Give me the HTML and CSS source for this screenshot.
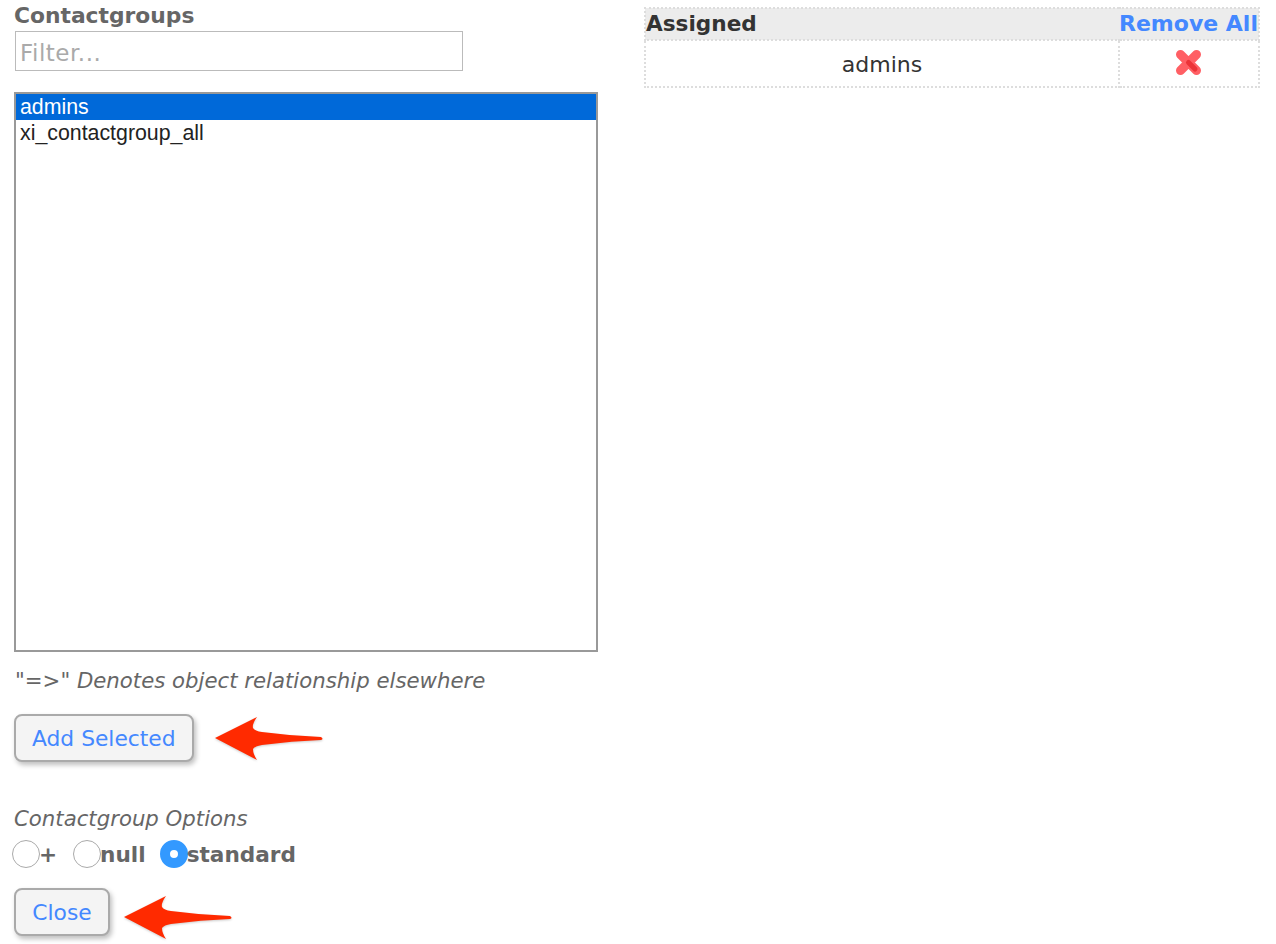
FILE: index.html
```html
<!DOCTYPE html>
<html>
<head>
  <title>Contactgroups</title>
  <link rel="stylesheet" href="styles.css">
</head>
<body>
  <div class="layout">
    <div class="left-col">
      <div class="heading">Contactgroups</div>
      <input class="filter" type="text" placeholder="Filter...">
      <div class="listbox">
        <div class="option selected">admins</div>
        <div class="option">xi_contactgroup_all</div>
      </div>
      <div class="note">"=&gt;" Denotes object relationship elsewhere</div>
      <div class="button-row">
        <button class="btn">Add Selected</button>
        <svg class="arrow arrow-add" width="112" height="50" viewBox="0 0 112 50">
          <path d="M3 24 L45 3 Q40 10 41 14 Q43 17 50 18 Q80 22 109 23 Q112 25 109 26 Q80 27 50 31 Q43 32 41 35 Q41 40 45 46 Z" fill="#ff2a00"/>
        </svg>
      </div>
      <div class="options-label">Contactgroup Options</div>
      <div class="radio-row">
        <span class="radio"></span><span class="radio-text plus">+</span>
        <span class="radio"></span><span class="radio-text null">null</span>
        <span class="radio checked"></span><span class="radio-text">standard</span>
      </div>
      <div class="button-row close-row">
        <button class="btn">Close</button>
        <svg class="arrow arrow-close" width="112" height="50" viewBox="0 0 112 50">
          <path d="M3 24 L45 3 Q40 10 41 14 Q43 17 50 18 Q80 22 109 23 Q112 25 109 26 Q80 27 50 31 Q43 32 41 35 Q41 40 45 46 Z" fill="#ff2a00"/>
        </svg>
      </div>
    </div>
    <div class="right-col">
      <table class="assigned">
        <tr>
          <th class="name-head">Assigned</th>
          <th class="remove-head"><a href="#">Remove All</a></th>
        </tr>
        <tr>
          <td class="name-cell">admins</td>
          <td class="remove-cell">
            <svg class="remove-icon" width="28" height="28" viewBox="0 0 28 28">
              <path d="M5.5 4.5 L21.5 20.5 M21.5 4.5 L5.5 20.5" stroke="#ff5f64" stroke-width="9" stroke-linecap="round"/>
              <path d="M13.5 12.5 L20 19" stroke="#ec3338" stroke-width="5" stroke-linecap="round"/>
            </svg>
          </td>
        </tr>
      </table>
    </div>
  </div>
</body>
</html>
```
FILE: styles.css
```css
html, body {
  margin: 0;
  height: 944px;
  overflow: hidden;
}

body {
  font-family: "DejaVu Sans", Verdana, sans-serif;
  font-size: 22px;
  color: #333;
  background: #fff;
}

.layout {
  display: flex;
  align-items: flex-start;
}

.left-col {
  width: 644px;
  padding-left: 14px;
  box-sizing: border-box;
}

.right-col {
  width: 616px;
  padding-top: 7px;
}

.heading {
  font-size: 21.8px;
  font-weight: bold;
  color: #666;
  line-height: 26px;
  margin-top: 3px;
}

.filter {
  display: block;
  width: 448px;
  height: 40px;
  margin: 2px 0 0 1px;
  padding: 4px 4px 0;
  box-sizing: border-box;
  border: 1px solid #bbb;
  font-family: "DejaVu Sans", Verdana, sans-serif;
  font-size: 23px;
  letter-spacing: 0.5px;
  background: #fff;
}

.filter::placeholder {
  color: #aaa;
}

.listbox {
  width: 584px;
  height: 560px;
  margin-top: 21px;
  box-sizing: border-box;
  border: 2px solid #999;
  font-family: "Liberation Sans", Arial, sans-serif;
  font-size: 21.33px;
  color: #222;
}

.option {
  height: 26px;
  line-height: 26px;
  padding-left: 4px;
}

.option.selected {
  background: #0069d9;
  color: #fff;
}

.note {
  font-size: 21.25px;
  font-style: italic;
  color: #666;
  line-height: 26px;
  margin: 16px 0 0 1px;
}

.button-row {
  position: relative;
  margin-top: 20px;
}

.close-row {
  margin-top: 19px;
}

.btn {
  display: block;
  height: 48px;
  padding: 0 16px;
  border: 2px solid #aaa;
  border-radius: 8px;
  background: #f4f4f4;
  box-shadow: 2px 3px 5px rgba(0, 0, 0, 0.25);
  color: #4488ff;
  font-family: "DejaVu Sans", Verdana, sans-serif;
  font-size: 21.8px;
}

.close-row .btn {
  width: 96px;
  padding: 0;
}

.arrow {
  position: absolute;
  top: 0;
  filter: drop-shadow(0 1px 1px rgba(0, 0, 0, 0.2));
}

.arrow-add {
  left: 198px;
}

.arrow-close {
  left: 107px;
  top: 5px;
}

.options-label {
  font-size: 21.25px;
  font-style: italic;
  color: #666;
  line-height: 26px;
  margin-top: 44px;
}

.radio-row {
  display: flex;
  align-items: center;
  margin: 7px 0 0 -2px;
  height: 30px;
  font-size: 21.6px;
  font-weight: bold;
  color: #666;
}

.radio {
  width: 28px;
  height: 28px;
  margin-right: -1px;
  box-sizing: border-box;
  border: 1px solid #aaa;
  border-radius: 50%;
  background: #fff;
}

.radio.checked {
  border: 10px solid #3399ff;
}

.radio-text {
  margin-right: 15px;
}

.radio-text.plus {
  margin-right: 16px;
}

.radio-text.null {
  margin-right: 14px;
}

.assigned {
  width: 100%;
  border-collapse: collapse;
  table-layout: fixed;
  font-size: 22px;
}

.assigned th,
.assigned td {
  border: 2px dotted #ddd;
  padding: 0;
}

.assigned th {
  background: #ececec;
  height: 30px;
  line-height: 30px;
  font-size: 21.6px;
  white-space: nowrap;
}

.name-head {
  text-align: left;
  color: #333;
  border-right: none !important;
}

.remove-head {
  width: 137px;
  text-align: right;
  border-left: none !important;
  padding-right: 2px !important;
}

.remove-head a {
  color: #4488ff;
  font-size: 22px;
  text-decoration: none;
}

.assigned .name-cell {
  text-align: center;
  height: 43px;
  padding-top: 2px;
}

.remove-cell {
  text-align: center;
  line-height: 0;
}

.remove-icon {
  filter: blur(0.4px);
}
```
